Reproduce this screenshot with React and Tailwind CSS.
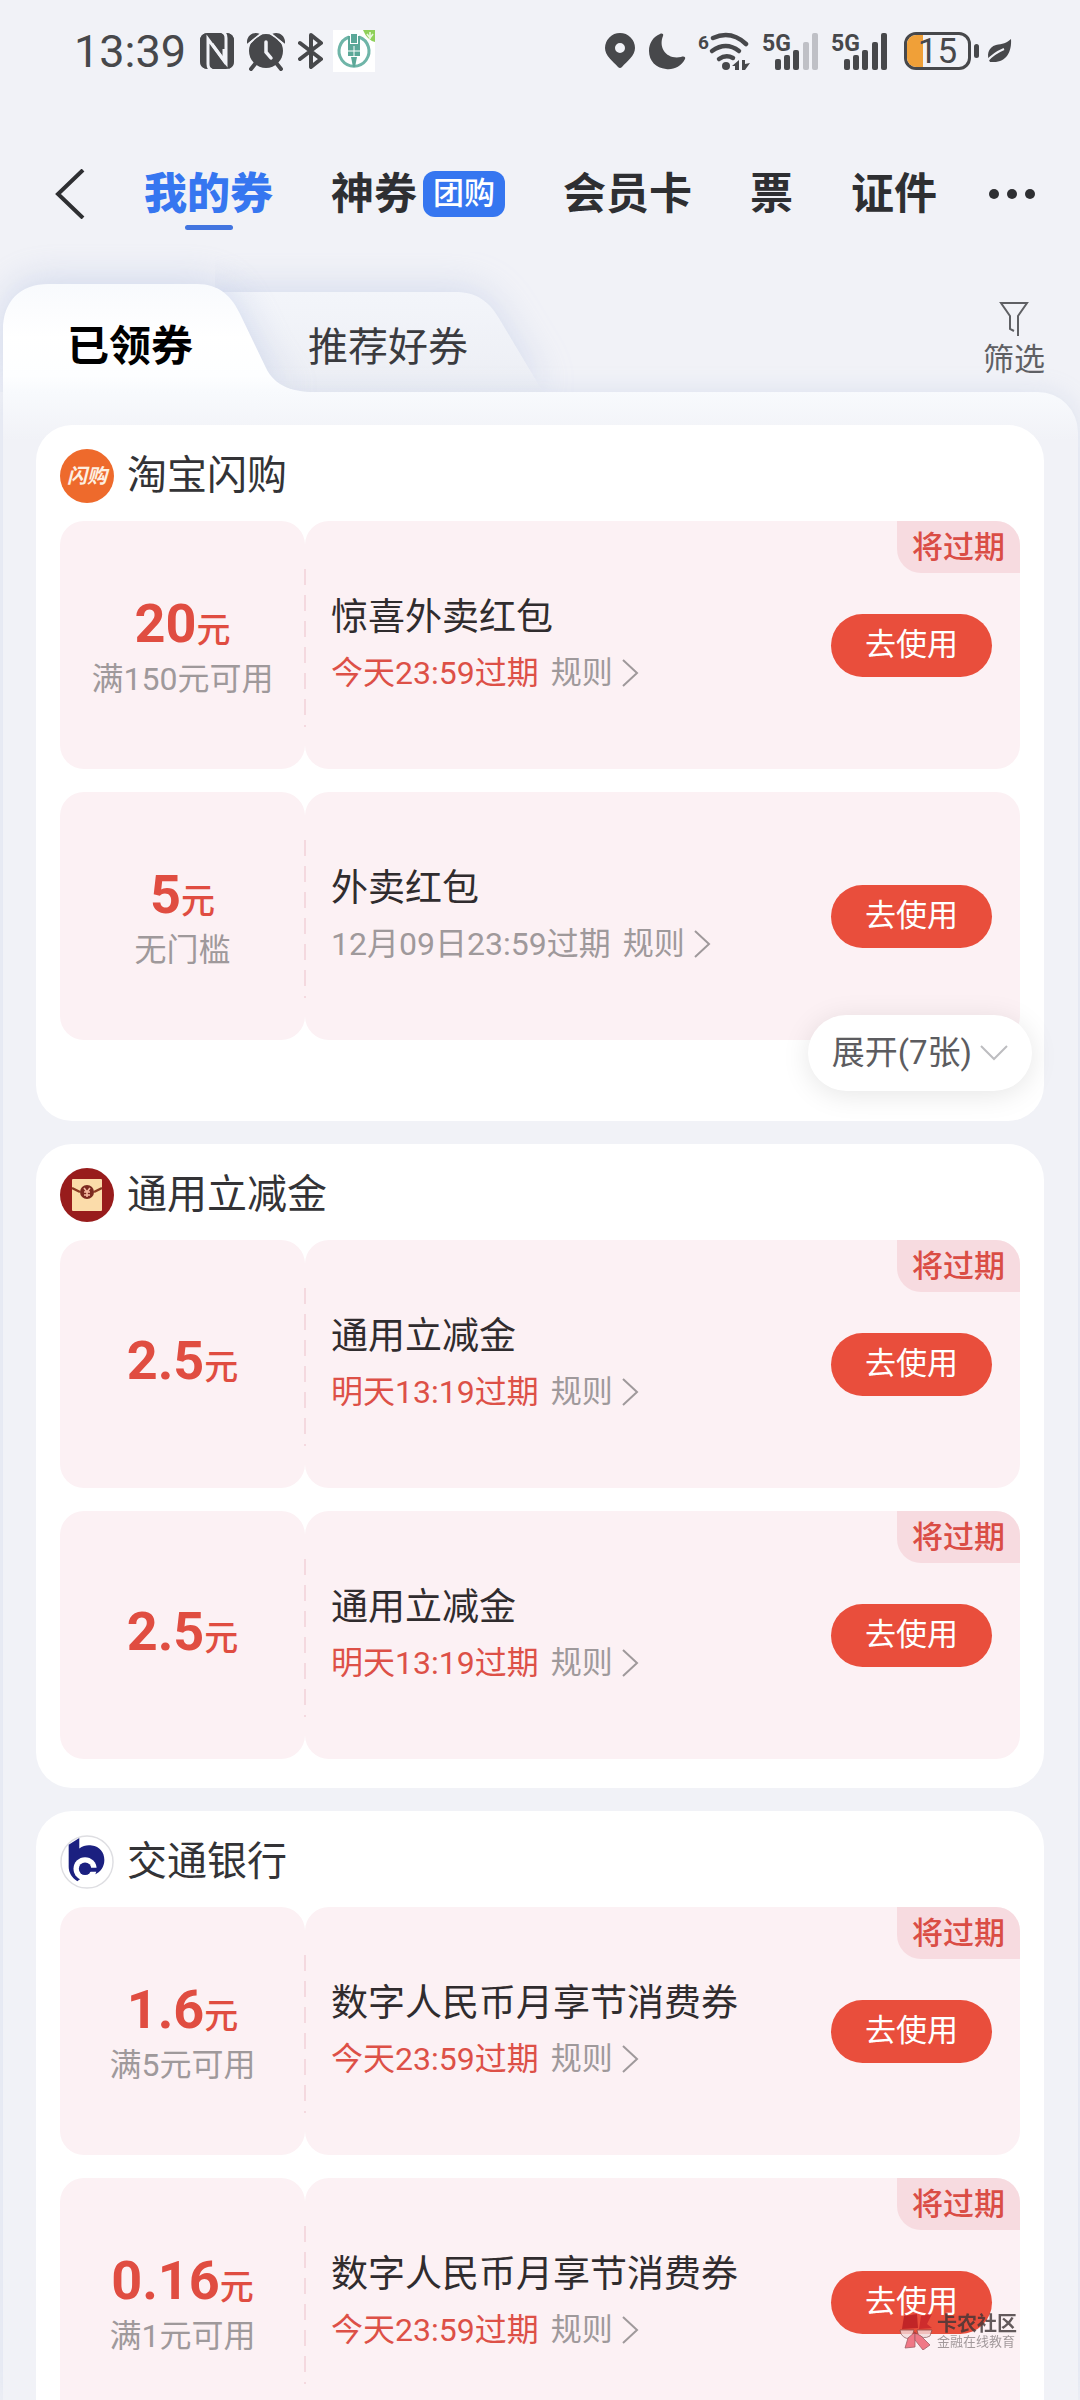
import React from "react";
import clsx from "clsx";

const navTabs = [
  { label: "我的券", active: true },
  { label: "神券", tag: "团购" },
  { label: "会员卡" },
  { label: "票" },
  { label: "证件" },
];

const groups = [
  {
    title: "淘宝闪购",
    logo: <FlashLogo />,
    more: "展开(7张)",
    coupons: [
      {
        amount: "20",
        condition: "满150元可用",
        name: "惊喜外卖红包",
        expires: "今天23:59过期",
        urgent: true,
      },
      {
        amount: "5",
        condition: "无门槛",
        name: "外卖红包",
        expires: "12月09日23:59过期",
        urgent: false,
      },
    ],
  },
  {
    title: "通用立减金",
    logo: <EnvelopeLogo />,
    coupons: [
      {
        amount: "2.5",
        name: "通用立减金",
        expires: "明天13:19过期",
        urgent: true,
      },
      {
        amount: "2.5",
        name: "通用立减金",
        expires: "明天13:19过期",
        urgent: true,
      },
    ],
  },
  {
    title: "交通银行",
    logo: <BankLogo />,
    coupons: [
      {
        amount: "1.6",
        condition: "满5元可用",
        name: "数字人民币月享节消费券",
        expires: "今天23:59过期",
        urgent: true,
      },
      {
        amount: "0.16",
        condition: "满1元可用",
        name: "数字人民币月享节消费券",
        expires: "今天23:59过期",
        urgent: true,
      },
    ],
  },
];

function FlashLogo() {
  return (
    <span className="flex size-[54px] items-center justify-center rounded-full bg-[#ee6a2c] text-[20px] leading-none font-bold text-[#fdf0e2] italic">
      闪购
    </span>
  );
}

function EnvelopeLogo() {
  return (
    <svg viewBox="0 0 54 54" className="size-[54px]" aria-hidden="true">
      <circle cx="27" cy="27" r="27" fill="#981c1c" />
      <rect x="12" y="11" width="30" height="32" rx="1" fill="#fbdcaa" />
      <path
        d="M12 20 L20 24 M42 20 L34 24"
        stroke="#8a3a22"
        strokeWidth="2.5"
      />
      <circle cx="27" cy="24" r="7" fill="#7c2a20" />
      <path
        d="M24 20 L27 24 L30 20 M27 24 V29 M24 24 H30 M24 27 H30"
        stroke="#f5b9a0"
        strokeWidth="1.6"
        fill="none"
      />
    </svg>
  );
}

function BankLogo() {
  return (
    <svg viewBox="0 0 56 56" className="size-[54px]" aria-hidden="true">
      <circle cx="28" cy="28" r="27" fill="#fff" stroke="#dedee2" strokeWidth="1.5" />
      <path
        d="M9 10 L20 3 V14 C24 11 29 10 33 11 C41 12 46 18 46 26 C46 33 42 39 36 41 H27 L18 48 C12 44 9 39 9 33 Z"
        fill="#1b2080"
      />
      <circle cx="26" cy="35" r="12" fill="#fff" />
      <path d="M30 41 H37 V47 H30 Z" fill="#fff" />
      <circle cx="26" cy="35" r="6.5" fill="#1b2080" />
      <path d="M26 34 H43 L40 38 H26 Z" fill="#1b2080" />
    </svg>
  );
}

function Signal({ faded }) {
  return (
    <svg viewBox="0 0 57 40" className="h-10 w-[57px]" aria-label="5G">
      <text
        x="0"
        y="20"
        fontSize="23"
        fontWeight="700"
        fill="#47484b"
        className="font-['Roboto',sans-serif]"
      >
        5G
      </text>
      <g fill="#47484b">
        <rect x="13" y="28" width="6" height="11" rx="2" />
        <rect x="22" y="24" width="6" height="15" rx="2" />
        <rect x="31" y="19" width="6" height="20" rx="2" />
      </g>
      <g fill={faded ? "#bfc0c6" : "#47484b"}>
        <rect x="41" y="11" width="6" height="28" rx="2" />
        <rect x="50" y="2" width="6" height="37" rx="2" />
      </g>
    </svg>
  );
}

function StatusBar() {
  return (
    <div className="flex h-[102px] shrink-0 items-center justify-between pr-[68px] pl-[74px] text-[#47484b]">
      <div className="flex items-center">
        <span className="text-[45px] leading-none">13:39</span>
        <div className="ml-[14px] flex items-center gap-[13px]">
          <svg viewBox="0 0 34 36" className="h-9 w-[34px]">
            <path
              d="M8 0 H16 L30 22 V36 H26 Q34 36 34 28 V8 Q34 0 26 0 H8 Q0 0 0 8 V28 Q0 36 8 36 H10 Z"
              fill="currentColor"
            />
            <rect width="34" height="36" rx="8" fill="currentColor" />
            <path
              d="M12 37 Q8 36 8 31 V6 L24 28 V16"
              fill="none"
              stroke="#f1f2f7"
              strokeWidth="3"
            />
            <path
              d="M22 -1 Q26 0 26 5 V30 L12 11"
              fill="none"
              stroke="#f1f2f7"
              strokeWidth="3"
            />
          </svg>
          <svg viewBox="0 0 38 40" className="h-10 w-[38px]" fill="currentColor">
            <circle cx="19" cy="20" r="17" />
            <path d="M0 13 C-1 5 6 0 13 3 Z M38 13 C39 5 32 0 25 3 Z" />
            <path
              d="M-1 15 L15 2 M39 15 L23 2"
              stroke="#f1f2f7"
              strokeWidth="2"
            />
            <circle cx="19" cy="20" r="16" />
            <path
              d="M8 33 L4 38 M30 33 L34 38"
              stroke="currentColor"
              strokeWidth="4"
              strokeLinecap="round"
            />
            <path
              d="M19 11 V21 L24 27"
              fill="none"
              stroke="#f1f2f7"
              strokeWidth="3.5"
              strokeLinecap="round"
            />
          </svg>
          <svg
            viewBox="0 0 26 38"
            className="h-[38px] w-[26px]"
            fill="none"
            stroke="currentColor"
            strokeWidth="4"
            strokeLinejoin="round"
            strokeLinecap="round"
          >
            <path d="M2 11 L23 27 L13 35 V3 L23 11 L2 27" />
          </svg>
          <svg viewBox="0 0 42 42" className="-ml-1 size-[42px]">
            <rect width="42" height="42" fill="#fff" />
            <path
              d="M16 7 A15 15 0 1 0 26 7"
              fill="none"
              stroke="#6fb5a8"
              strokeWidth="3"
            />
            <path
              d="M16 6 V15 H26 V6"
              fill="none"
              stroke="#5ba898"
              strokeWidth="2"
            />
            <rect x="18" y="4" width="6" height="9" fill="#5ba898" />
            <rect x="15" y="16" width="12" height="10" fill="#5ba898" />
            <path d="M15 21 H27 M21 16 V26" stroke="#fff" strokeWidth="1" />
            <path d="M18 27 H24 L22 37 H20 Z" fill="#5ba898" />
            <path d="M30 0 H42 V12 Q34 10 30 0 Z" fill="#8fd05a" />
            <path
              d="M37 2 V9 M34 4 L37 8 L40 4"
              stroke="#e9f8dc"
              strokeWidth="1.6"
              fill="none"
            />
          </svg>
        </div>
      </div>

      <div className="flex items-center gap-3">
        <svg viewBox="0 0 32 38" className="h-[38px] w-8" fill="currentColor">
          <path
            fillRule="evenodd"
            d="M16 1 A15 15 0 0 1 31 16 C31 24 23 29 18 35 Q16 37 14 35 C9 29 1 24 1 16 A15 15 0 0 1 16 1 Z M16 11 A5 5 0 1 0 16 21 A5 5 0 1 0 16 11 Z"
          />
        </svg>
        <svg viewBox="0 0 38 38" className="size-[38px]" fill="currentColor">
          <path d="M12 2 C14 1 16 2 15 4 C10 16 19 28 33 25 C36 24 38 25 37 27 C33 35 25 38 18 37 C8 36 1 29 1 19 C1 11 5 5 12 2 Z" />
        </svg>
        <svg
          viewBox="0 0 52 42"
          className="h-[42px] w-[52px]"
          fill="none"
          stroke="currentColor"
          strokeWidth="4.5"
          strokeLinecap="round"
        >
          <text
            x="0"
            y="19"
            fontSize="19"
            fontWeight="700"
            fill="currentColor"
            stroke="none"
            className="font-['Roboto',sans-serif]"
          >
            6
          </text>
          <path d="M15 8 Q33 0 48 14" />
          <path d="M14 21 Q28 11 41 21" />
          <path d="M21 29 Q28 24 35 28" />
          <circle cx="28" cy="36" r="4" fill="currentColor" stroke="none" />
          <path
            d="M41 30 V40 H37 V36 H34 Z M44 30 H47 V34 L52 33 L47 40 H44 Z"
            fill="currentColor"
            stroke="none"
          />
        </svg>
        <Signal faded />
        <Signal />
        <div className="ml-1 flex items-center gap-[3px]">
          <div className="relative flex h-[38px] w-[67px] items-center justify-center overflow-hidden rounded-[12px] border-[3px] border-current">
            <div className="absolute inset-y-0 left-0 w-4 bg-[#f0a038]" />
            <span className="relative text-[35px] leading-none">15</span>
          </div>
          <div className="h-[14px] w-[5px] rounded-sm bg-current" />
          <svg viewBox="0 0 26 26" className="ml-1 size-[26px]">
            <path
              d="M25 1 C26 14 20 25 6 24 L4 24 C0 18 2 9 10 7 C16 6 21 5 25 1 Z"
              fill="currentColor"
            />
            <path
              d="M1 23 C6 17 11 14 18 11"
              fill="none"
              stroke="#f1f2f7"
              strokeWidth="2"
            />
          </svg>
        </div>
      </div>
    </div>
  );
}

function Nav() {
  return (
    <nav className="flex h-[182px] shrink-0 items-center gap-[58px] overflow-hidden px-[55px] pt-[2px] text-[43px] leading-[60px] font-bold text-[#2e2f32]">
      <button type="button" aria-label="返回" className="w-[31px] shrink-0">
        <svg
          viewBox="0 0 31 50"
          className="h-[50px] w-[31px]"
          fill="none"
          stroke="currentColor"
          strokeWidth="4"
        >
          <path d="M28 1 L3 25 L28 49" />
        </svg>
      </button>
      {navTabs.map((tab) => (
        <a
          key={tab.label}
          href="#"
          className={clsx(
            "relative flex shrink-0 items-center gap-[6px]",
            tab.active && "font-black text-[#3676f0]"
          )}
        >
          {tab.label}
          {tab.tag && (
            <span className="rounded-[12px] bg-[#3676f0] px-[10px] text-[31px] leading-[46px] font-medium text-white">
              {tab.tag}
            </span>
          )}
          {tab.active && (
            <span className="absolute -bottom-[6px] left-1/2 h-[5px] w-12 -translate-x-1/2 rounded-full bg-[#4275e0]" />
          )}
        </a>
      ))}
      <button type="button" aria-label="更多" className="-ml-[6px] flex shrink-0 gap-2">
        <span className="size-[10px] rounded-full bg-current" />
        <span className="size-[10px] rounded-full bg-current" />
        <span className="size-[10px] rounded-full bg-current" />
      </button>
    </nav>
  );
}

function SubTabs() {
  return (
    <div className="flex h-[108px] shrink-0 items-end pl-[3px]">
      <button
        type="button"
        className="relative z-10 h-[108px] w-[252px] pt-4 text-left text-[42px] font-bold text-black"
      >
        <svg
          viewBox="0 0 318 108"
          className="absolute bottom-0 left-0 h-[108px] w-[318px] overflow-visible drop-shadow-[0_-4px_18px_rgba(160,178,220,0.4)] [clip-path:inset(-40px_-60px_0_-3px)]"
          aria-hidden="true"
        >
          <defs>
            <linearGradient id="tabFill" x1="0" y1="0" x2="0" y2="1">
              <stop offset="0" stopColor="#f8fafd" />
              <stop offset="0.5" stopColor="#ffffff" />
              <stop offset="0.85" stopColor="#fdfeff" />
              <stop offset="1" stopColor="#f8fafd" />
            </linearGradient>
          </defs>
          <path
            d="M0 108 V46 C0 18 16 0 46 0 H194 C216 0 229 12 238 32 L263 84 C271 100 286 108 312 108 Z"
            fill="url(#tabFill)"
          />
        </svg>
        <span className="relative pl-[64px]">已领券</span>
      </button>
      <button
        type="button"
        className="relative h-[100px] w-[285px] pt-3 text-left text-[40px] text-[#3a3b3f]"
      >
        <svg
          viewBox="0 0 340 100"
          className="absolute bottom-0 -left-10 h-[100px] w-[340px] overflow-visible drop-shadow-[0_-4px_18px_rgba(160,178,220,0.35)] [clip-path:inset(-40px_-60px_0_0)]"
          aria-hidden="true"
        >
          <defs>
            <linearGradient id="tabFillBack" x1="0" y1="0" x2="0" y2="1">
              <stop offset="0" stopColor="#f3f5fa" />
              <stop offset="1" stopColor="#eceef4" />
            </linearGradient>
          </defs>
          <path
            d="M0 0 H240 C262 0 275 10 285 28 L328 100 H0 Z"
            fill="url(#tabFillBack)"
          />
        </svg>
        <span className="relative pl-[53px]">推荐好券</span>
      </button>
      <button
        type="button"
        className="mr-[35px] mb-3 ml-auto flex flex-col items-center gap-1 text-[31px] leading-10 text-[#5f6064]"
      >
        <svg
          viewBox="0 0 30 34"
          className="h-[34px] w-[30px]"
          fill="none"
          stroke="currentColor"
          strokeWidth="2"
        >
          <path d="M19 34 V14 L28 1 H2 L11 14 V27 L15 29" />
        </svg>
        筛选
      </button>
    </div>
  );
}

function Coupon({ coupon }) {
  return (
    <li className="relative flex h-[248px]">
      <div className="flex w-[245px] shrink-0 flex-col items-center justify-center rounded-[24px] bg-[#fcf1f4]">
        <p className="text-[54px] leading-[62px] font-bold text-[#e04d41]">
          {coupon.amount}
          <span className="text-[34px] font-medium">元</span>
        </p>
        {coupon.condition && (
          <p className="text-[32px] leading-9 text-[#9f999b]">
            {coupon.condition}
          </p>
        )}
      </div>
      <div className="relative min-w-0 flex-1 rounded-[24px] bg-[#fcf1f4]">
        <div className="absolute top-12 bottom-[42px] -left-px w-[2px] bg-[repeating-linear-gradient(to_bottom,#f4d9df_0_16px,transparent_16px_26px)]" />
        <div className="flex h-full items-center justify-between overflow-hidden rounded-[24px] pr-7 pl-[26px]">
          <div>
            <h3 className="text-[37px] leading-[56px] text-[#302c2e]">
              {coupon.name}
            </h3>
            <p className="flex items-center gap-3 text-[32px] leading-[54px] text-[#9f999b]">
              <span className={clsx(coupon.urgent && "text-[#dd5047]")}>
                {coupon.expires}
              </span>
              <a href="#" className="flex items-center gap-2 text-[31px]">
                规则
                <svg
                  viewBox="0 0 18 28"
                  className="h-7 w-[18px]"
                  fill="none"
                  stroke="currentColor"
                  strokeWidth="2"
                >
                  <path d="M2 1 L16 14 L2 27" />
                </svg>
              </a>
            </p>
          </div>
          <button
            type="button"
            className="h-[63px] w-[161px] shrink-0 rounded-full bg-[#e94e3c] text-[31px] text-white"
          >
            去使用
          </button>
          {coupon.urgent && (
            <span className="absolute top-0 right-0 rounded-tr-[24px] rounded-bl-[24px] bg-[#f7dbe0] px-[15px] pt-[2px] text-[31px] leading-[50px] font-medium text-[#da4d45]">
              将过期
            </span>
          )}
        </div>
      </div>
    </li>
  );
}

function CouponGroup({ group }) {
  return (
    <section
      className={clsx(
        "relative rounded-[36px] bg-white px-6",
        group.more ? "pb-[81px]" : "pb-[29px]"
      )}
    >
      <header className="flex h-24 items-center gap-[13px] pt-[6px]">
        {group.logo}
        <h2 className="text-[40px] leading-[56px] text-[#333336]">{group.title}</h2>
      </header>
      <ul className="flex flex-col gap-[23px]">
        {group.coupons.map((coupon, i) => (
          <Coupon key={i} coupon={coupon} />
        ))}
      </ul>
      {group.more && (
        <button
          type="button"
          className="absolute right-3 bottom-[30px] flex h-[76px] items-center gap-2 rounded-full bg-white px-6 text-[33px] text-[#5c5c60] shadow-[0_4px_28px_rgba(0,0,0,0.1)]"
        >
          {group.more}
          <svg
            viewBox="0 0 28 16"
            className="h-4 w-7"
            fill="none"
            stroke="#bdbdc0"
            strokeWidth="2"
          >
            <path d="M1 1 L14 14 L27 1" />
          </svg>
        </button>
      )}
    </section>
  );
}

function Watermark() {
  return (
    <div className="absolute right-[63px] bottom-[50px] flex items-center gap-1 opacity-80">
      <svg viewBox="0 0 34 36" className="h-9 w-[34px]" aria-hidden="true">
        <path d="M5 2 L18 0 L19 14 L3 15 Z" fill="#b81c22" />
        <path d="M22 2 L33 0 L28 10 L33 14 L20 15 Z" fill="#c8242a" />
        <path
          d="M1 16 H15 L13 23 Q7 27 2 20 Z M18 16 H33 L31 22 Q24 26 19 20 Z"
          fill="#f3dcdc"
          stroke="#7a4a4a"
          strokeWidth="0.8"
        />
        <path
          d="M9 24 L16 18 V33 L6 34 Z"
          fill="#ee5b6b"
          stroke="#8a3a42"
          strokeWidth="0.8"
        />
        <path
          d="M16 19 L22 22 L31 31 L24 36 L16 26 Z"
          fill="#ee5b6b"
          stroke="#8a3a42"
          strokeWidth="0.8"
        />
      </svg>
      <div className="text-[#3e3436]">
        <p className="text-[20px] leading-5 font-bold">卡农社区</p>
        <p className="text-[13px] leading-4 text-[#8d8486]">金融在线教育</p>
      </div>
    </div>
  );
}

export default function App() {
  return (
    <div className="relative flex h-screen flex-col overflow-hidden bg-[#f1f2f7] font-['Roboto','Noto_Sans_CJK_SC',sans-serif]">
      <StatusBar />
      <Nav />
      <SubTabs />
      <main className="relative mr-[2px] ml-[3px] min-h-0 flex-1 rounded-tr-[40px] bg-[#f1f2f7] bg-[linear-gradient(to_bottom,#f8fafd,#f1f2f7_48px)] shadow-[0_0_24px_rgba(160,178,220,0.25)]">
        <div className="flex h-full flex-col gap-[23px] overflow-y-auto pt-[33px] pr-[34px] pl-[33px] [scrollbar-width:none]">
          {groups.map((group) => (
            <CouponGroup key={group.title} group={group} />
          ))}
        </div>
      </main>
      <Watermark />
    </div>
  );
}
